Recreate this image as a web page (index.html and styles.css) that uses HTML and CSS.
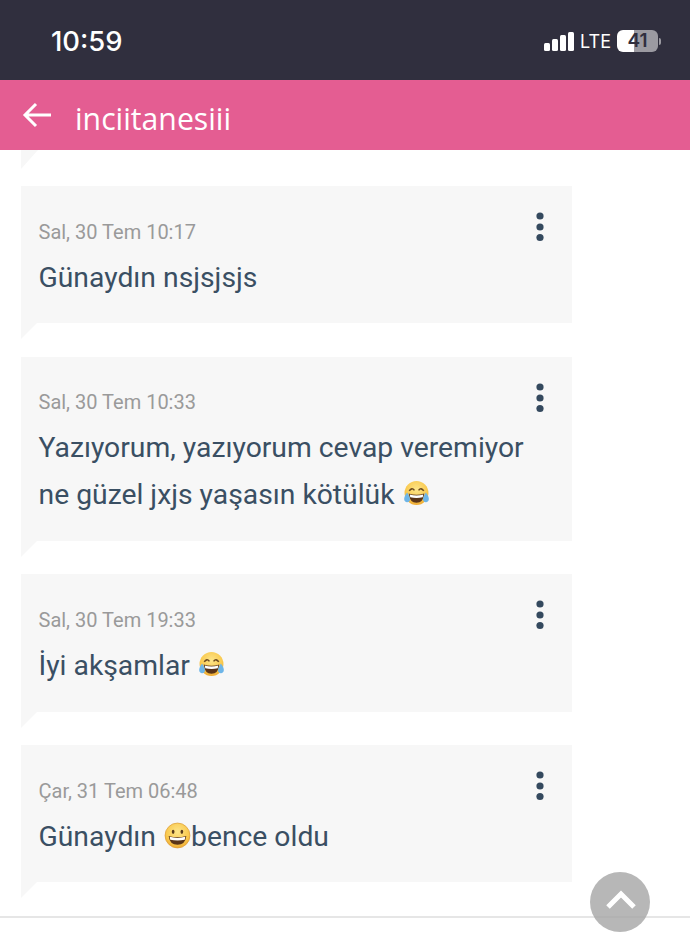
FILE: index.html
```html
<!DOCTYPE html>
<html lang="en">
<head>
    <meta charset="UTF-8">
    <meta name="viewport" content="width=device-width, initial-scale=1.0">
    <title>inciitanesiii</title>
    <link rel="stylesheet" href="styles.css">
</head>
<body>
    <svg class="defs" width="0" height="0">
        <defs>
            <radialGradient id="skin" cx="50%" cy="35%" r="70%">
                <stop offset="0" stop-color="#fde58a"/>
                <stop offset="0.65" stop-color="#f9c94e"/>
                <stop offset="1" stop-color="#eda32c"/>
            </radialGradient>
            <symbol id="laugh" viewBox="0 0 26 26">
                <circle cx="13" cy="12.5" r="11.5" fill="url(#skin)"/>
                <path d="M6 10.5 Q8.5 6.8 11 10" fill="none" stroke="#6b4a20" stroke-width="1.5"/>
                <path d="M15 10 Q17.5 6.8 20 10.5" fill="none" stroke="#6b4a20" stroke-width="1.5"/>
                <path d="M5.5 13 Q13 15.5 20.5 13 Q19.5 22 13 22 Q6.5 22 5.5 13Z" fill="#5a3418"/>
                <path d="M6.5 14 Q13 16 19.5 14 L19 16.5 Q13 18 7 16.5Z" fill="#fff"/>
                <path d="M4 12 Q0 17 1.5 20 Q4 23 6.5 20 Q7.5 17 4 12Z" fill="#6db5e8"/>
                <path d="M22 12 Q26 17 24.5 20 Q22 23 19.5 20 Q18.5 17 22 12Z" fill="#6db5e8"/>
            </symbol>
            <symbol id="grin" viewBox="0 0 26 26">
                <circle cx="13" cy="13" r="12" fill="url(#skin)"/>
                <circle cx="13" cy="13" r="12" fill="none" stroke="#d9952c" stroke-width="0.6"/>
                <ellipse cx="8.8" cy="9.5" rx="1.3" ry="2" fill="#5a3c1c"/>
                <ellipse cx="17.2" cy="9.5" rx="1.3" ry="2" fill="#5a3c1c"/>
                <path d="M4.5 13.5 Q13 16 21.5 13.5 Q20.5 22 13 22 Q5.5 22 4.5 13.5Z" fill="#5a3418"/>
                <path d="M5.5 14.3 Q13 16.5 20.5 14.3 L20 17 Q13 18.5 6 17Z" fill="#fff"/>
            </symbol>
            <symbol id="dots" viewBox="0 0 10 32">
                <circle cx="5" cy="5" r="3.6"/>
                <circle cx="5" cy="16" r="3.6"/>
                <circle cx="5" cy="26.5" r="3.6"/>
            </symbol>
        </defs>
    </svg>

    <div class="status-bar">
        <div class="clock">10:59</div>
        <div class="status-icons">
            <div class="signal">
                <span class="bar bar-1"></span>
                <span class="bar bar-2"></span>
                <span class="bar bar-3"></span>
                <span class="bar bar-4"></span>
            </div>
            <div class="network">LTE</div>
            <div class="battery">
                <div class="battery-body">41</div>
                <div class="battery-nub"></div>
            </div>
        </div>
    </div>

    <div class="header">
        <svg class="back-icon" width="30" height="28" viewBox="0 0 30 28">
            <path d="M14 3 L3 14 L14 25 M3 14 L29 14" fill="none" stroke="#fff" stroke-width="3"/>
        </svg>
        <div class="title">inciitanesiii</div>
    </div>

    <div class="messages">
        <div class="tail-stub"></div>

        <div class="message">
            <div class="message-date">Sal, 30 Tem 10:17</div>
            <div class="message-text">Günaydın nsjsjsjs</div>
            <svg class="message-menu"><use href="#dots"/></svg>
        </div>

        <div class="message">
            <div class="message-date">Sal, 30 Tem 10:33</div>
            <div class="message-text">Yazıyorum, yazıyorum cevap veremiyor<br>ne güzel jxjs yaşasın kötülük <svg class="emoji"><use href="#laugh"/></svg></div>
            <svg class="message-menu"><use href="#dots"/></svg>
        </div>

        <div class="message">
            <div class="message-date">Sal, 30 Tem 19:33</div>
            <div class="message-text">İyi akşamlar <svg class="emoji"><use href="#laugh"/></svg></div>
            <svg class="message-menu"><use href="#dots"/></svg>
        </div>

        <div class="message">
            <div class="message-date">Çar, 31 Tem 06:48</div>
            <div class="message-text">Günaydın <svg class="emoji"><use href="#grin"/></svg>bence oldu</div>
            <svg class="message-menu"><use href="#dots"/></svg>
        </div>
    </div>

    <div class="footer-line"></div>

    <div class="scroll-top">
        <svg width="32" height="22" viewBox="0 0 32 22">
            <path d="M3 18 L16 5 L29 18" fill="none" stroke="#fff" stroke-width="5"/>
        </svg>
    </div>
</body>
</html>
```

FILE: styles.css
```css
body {
    font-family: Roboto, sans-serif;
    margin: 0;
    padding: 0;
    height: 933px;
    overflow: hidden;
    position: relative;
    background-color: #fff;
}

.defs {
    display: block;
    height: 0;
}

.status-bar {
    height: 80px;
    background-color: #302f3e;
    color: #fff;
    display: flex;
    justify-content: space-between;
    align-items: center;
    padding: 2px 29px 0 51px;
    box-sizing: border-box;
}

.clock {
    font-family: Inter, sans-serif;
    font-size: 27.4px;
    font-weight: 500;
}

.status-icons {
    display: flex;
    align-items: center;
}

.signal {
    display: flex;
    align-items: flex-end;
    gap: 2.2px;
    height: 19px;
    margin-right: 6px;
}

.bar {
    width: 6px;
    background-color: #fff;
    border-radius: 1.5px;
}

.bar-1 { height: 8px; }
.bar-2 { height: 12px; }
.bar-3 { height: 16px; }
.bar-4 { height: 19px; }

.network {
    font-family: Inter, sans-serif;
    font-size: 18px;
    margin-right: 6px;
}

.battery {
    display: flex;
    align-items: center;
}

.battery-body {
    width: 41px;
    height: 22px;
    border-radius: 6px;
    background: linear-gradient(90deg, #fff 0, #fff 17px, #9b9aa1 17px);
    color: #302f3e;
    font-family: Inter, sans-serif;
    font-size: 19px;
    font-weight: 600;
    line-height: 22px;
    text-align: center;
}

.battery-nub {
    width: 2px;
    height: 7px;
    margin-left: 1px;
    border-radius: 0 2px 2px 0;
    background-color: #9b9aa1;
}

.header {
    height: 70px;
    background-color: #e45d92;
    color: #fff;
    display: flex;
    align-items: center;
    padding-left: 22px;
}

.back-icon {
    margin-right: 23px;
    margin-top: -1px;
}

.title {
    font-family: "Open Sans", sans-serif;
    font-size: 30.2px;
    margin-top: 6px;
}

.messages {
    padding: 0 0 0 21px;
}

.tail-stub {
    width: 0;
    height: 0;
    margin-bottom: 17px;
    border-top: 19px solid #f7f7f7;
    border-right: 17px solid transparent;
}

.message {
    position: relative;
    width: 551px;
    box-sizing: border-box;
    background-color: #f7f7f7;
    padding: 30.6px 17.5px 22.8px;
    margin-bottom: 33.3px;
}

/* little corner under each bubble */
.message::after {
    content: "";
    position: absolute;
    left: 0;
    top: 100%;
    border-top: 16px solid #f7f7f7;
    border-right: 16px solid transparent;
}

.message-date {
    font-size: 20px;
    line-height: 30px;
    color: #9a9a9a;
}

.message-text {
    margin-top: 7px;
    font-size: 28.3px;
    line-height: 47px;
    color: #3a4f63;
}

.message-menu {
    position: absolute;
    top: 25px;
    left: 514px;
    width: 10px;
    height: 32px;
    fill: #34495e;
}

.emoji {
    width: 27px;
    height: 27px;
    margin-left: 1px;
    vertical-align: -3px;
}

.footer-line {
    position: absolute;
    left: 0;
    right: 0;
    top: 916px;
    height: 2px;
    background-color: #e6e6e6;
}

.scroll-top {
    position: absolute;
    left: 590px;
    top: 872px;
    width: 60px;
    height: 60px;
    padding: 0 0 4px 2px;
    box-sizing: border-box;
    border-radius: 50%;
    background-color: rgba(165, 165, 165, 0.8);
    display: flex;
    justify-content: center;
    align-items: center;
}
```
